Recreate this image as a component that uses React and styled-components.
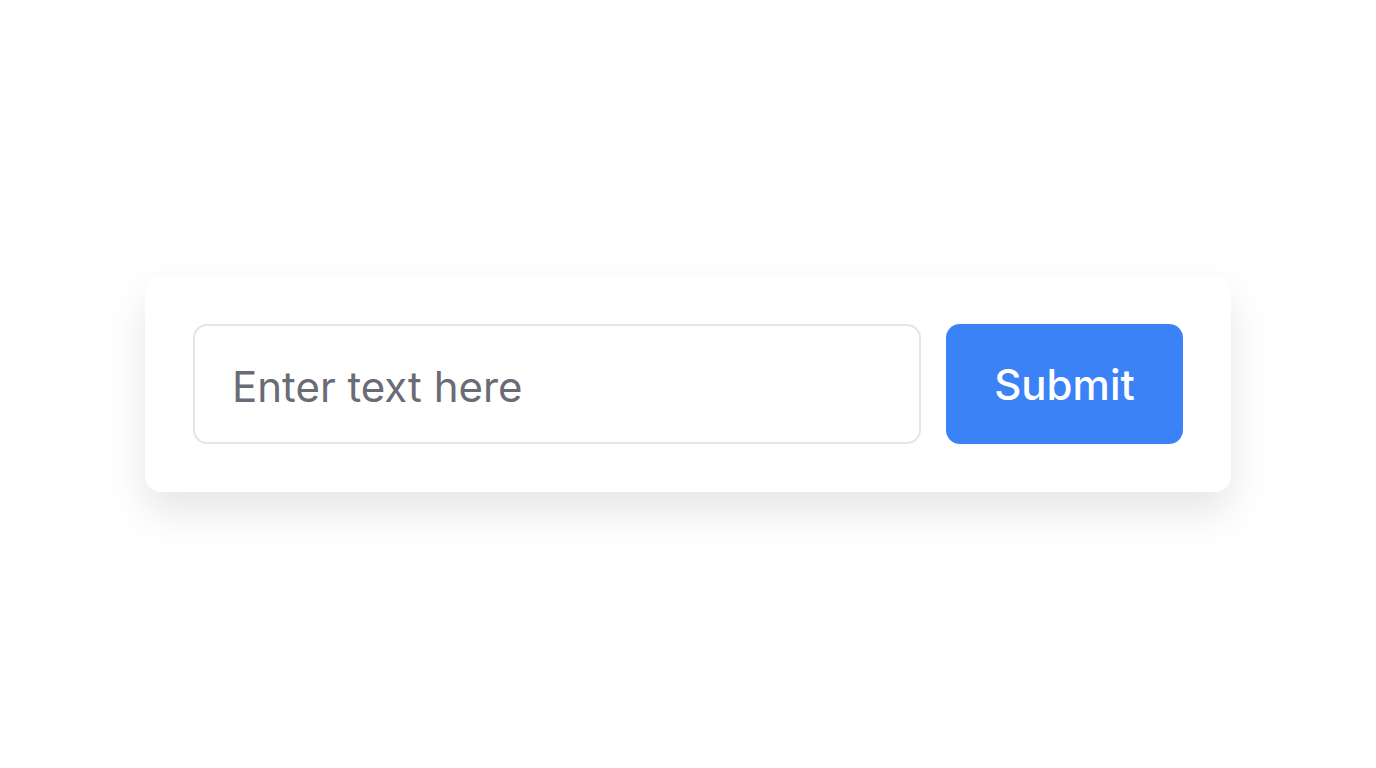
import React from "react";
import styled, { createGlobalStyle } from "styled-components";

const Global = createGlobalStyle`
  html, body { margin: 0; padding: 0; background: #ffffff; }
  body { font-family: Inter, "Noto Sans", sans-serif; }
  #root { min-height: 100vh; }
`;

const Page = styled.div`
  min-height: 100vh;
  display: flex;
  align-items: center;
  justify-content: center;
`;

const Card = styled.form`
  width: 1086px;
  box-sizing: border-box;
  padding: 48px;
  background: #ffffff;
  border-radius: 16px;
  box-shadow: 0 20px 40px rgba(0, 0, 0, 0.1);
  display: flex;
  align-items: stretch;
  gap: 25px;
`;

const Input = styled.input`
  flex: 1;
  min-width: 0;
  height: 120px;
  box-sizing: border-box;
  border: 2px solid #e5e5e5;
  border-radius: 14px;
  padding: 4px 37px 0;
  font-family: Inter, sans-serif;
  font-size: 42px;
  color: #111827;
  outline: none;
  &::placeholder { color: #6b6b75; }
`;

const Button = styled.button`
  width: 237px;
  height: 120px;
  box-sizing: border-box;
  border: none;
  border-radius: 14px;
  background: #3b82f6;
  color: #ffffff;
  font-family: Inter, sans-serif;
  font-size: 42px;
  font-weight: 500;
  cursor: pointer;
`;

export default function App() {
  return (
    <>
      <Global />
      <Page>
        <Card onSubmit={(e) => e.preventDefault()}>
          <Input type="text" placeholder="Enter text here" />
          <Button type="submit">Submit</Button>
        </Card>
      </Page>
    </>
  );
}
